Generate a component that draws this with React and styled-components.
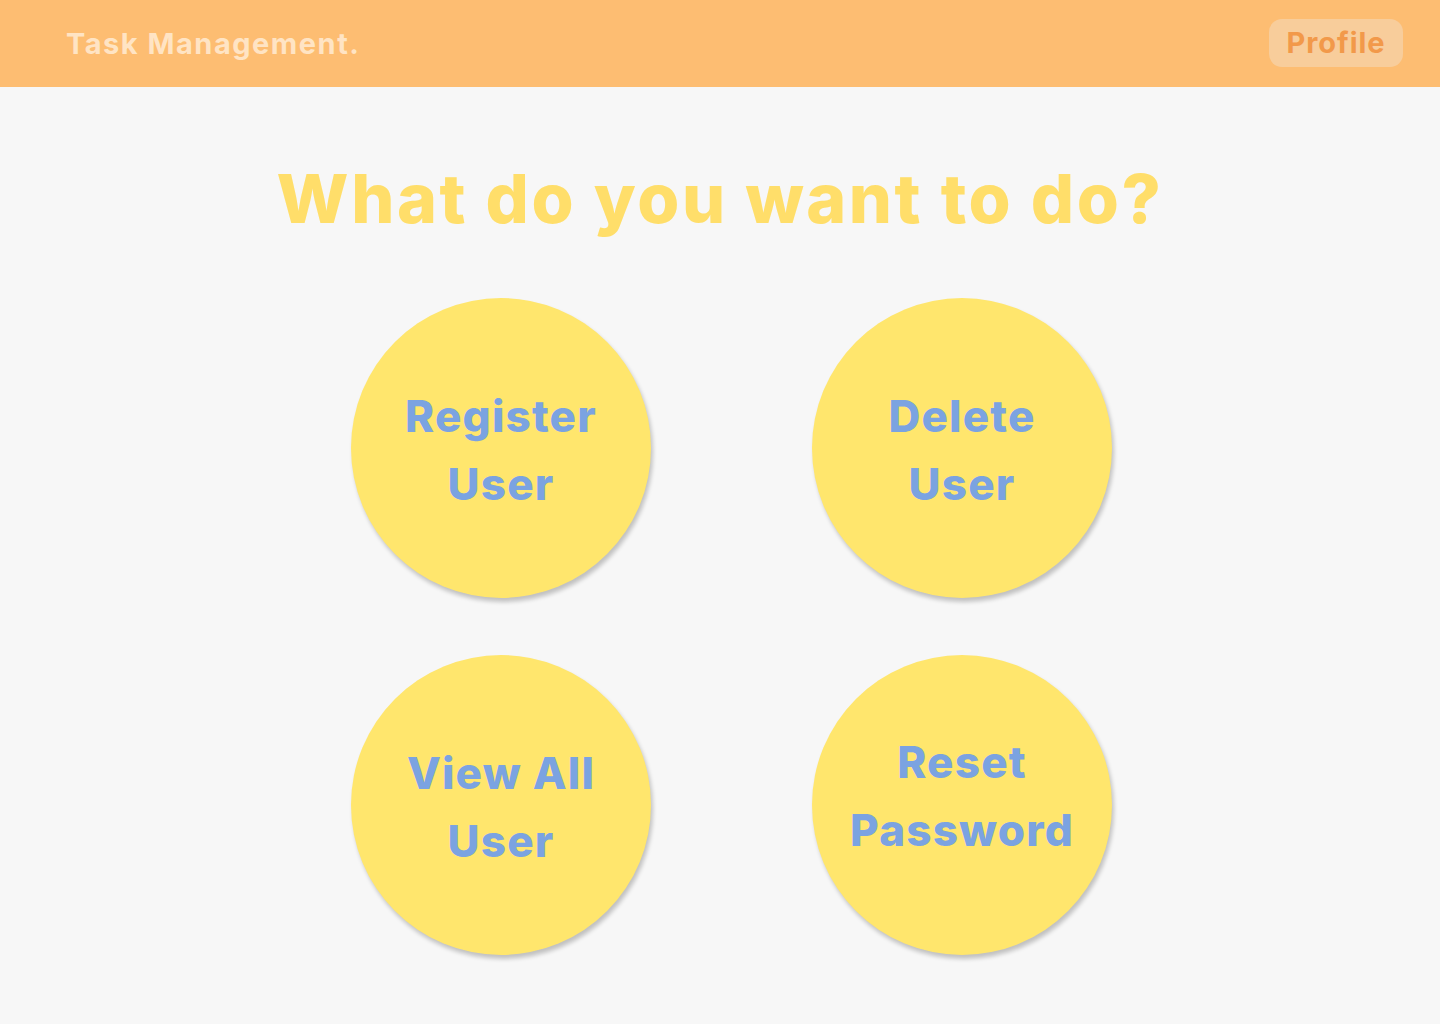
import React from 'react'
import styled, {createGlobalStyle, css} from 'styled-components';

const COLORS = {
    HEADER: '#FDBD72',
    BRAND: '#FFE4C4',
    PROFILE_BG: '#F8CD9B',
    PROFILE_TEXT: '#F2994A',
    PAGE: '#F7F7F7',
    HEADING: '#FFDE6A',
    CIRCLE: '#FFE66D',
    LABEL: '#7BA3E1',
};

const FONT = `Inter, "Noto Sans", "DejaVu Sans", sans-serif`;

const GlobalStyle = createGlobalStyle`
    html, body {
        margin: 0;
        padding: 0;
        background: ${COLORS.PAGE};
        font-family: ${FONT};
    }
    * {
        box-sizing: border-box;
    }
`;

const Page = styled.div`
    min-height: 1024px;
    background: ${COLORS.PAGE};
`;

const Header = styled.header`
    height: 87px;
    background: ${COLORS.HEADER};
    display: flex;
    align-items: center;
    justify-content: space-between;
    padding: 0 37px 0 66px;
`;

const Brand = styled.div`
    font-size: 29px;
    font-weight: 700;
    color: ${COLORS.BRAND};
    letter-spacing: 1.5px;
`;

const ProfileButton = styled.button`
    font-family: ${FONT};
    height: 48px;
    width: 134px;
    border: none;
    border-radius: 13px;
    background: ${COLORS.PROFILE_BG};
    color: ${COLORS.PROFILE_TEXT};
    font-size: 29px;
    font-weight: 700;
    letter-spacing: 0.9px;
    cursor: pointer;
    padding: 0;
    position: relative;
    top: -1px;
`;

const Main = styled.main`
    display: flex;
    flex-direction: column;
    align-items: center;
`;

const Heading = styled.h1`
    margin: 70px 0 0;
    height: 141px;
    font-size: 68px;
    line-height: 82px;
    font-weight: 800;
    color: ${COLORS.HEADING};
    letter-spacing: 2.6px;
`;

const Grid = styled.div`
    display: grid;
    grid-template-columns: repeat(2, 300px);
    column-gap: 161px;
    row-gap: 57px;
    padding-left: 23px;
`;

const Circle = styled.button`
    width: 300px;
    height: 300px;
    border-radius: 50%;
    border: none;
    background: ${COLORS.CIRCLE};
    box-shadow: 2px 4px 4px rgba(0, 0, 0, 0.22);
    display: flex;
    align-items: center;
    justify-content: center;
    cursor: pointer;
    padding: 0;
`;

const Label = styled.span`
    font-family: ${FONT};
    font-size: 44px;
    line-height: 68px;
    font-weight: 800;
    color: ${COLORS.LABEL};
    text-align: center;
    letter-spacing: 1.2px;
    ${({shift}) => shift && css`
        margin-top: ${shift}px;
    `}
`;

const actions = [
    {lines: ['Register', 'User'], shift: 4},
    {lines: ['Delete', 'User'], shift: 4},
    {lines: ['View All', 'User'], shift: 4},
    {lines: ['Reset', 'Password'], shift: -18},
];

export default function App() {
    return <Page>
        <GlobalStyle/>
        <Header>
            <Brand>Task Management.</Brand>
            <ProfileButton>Profile</ProfileButton>
        </Header>
        <Main>
            <Heading>What do you want to do?</Heading>
            <Grid>
                {actions.map(a => (
                    <Circle key={a.lines.join(' ')}>
                        <Label shift={a.shift}>
                            {a.lines[0]}<br/>{a.lines[1]}
                        </Label>
                    </Circle>
                ))}
            </Grid>
        </Main>
    </Page>
}
